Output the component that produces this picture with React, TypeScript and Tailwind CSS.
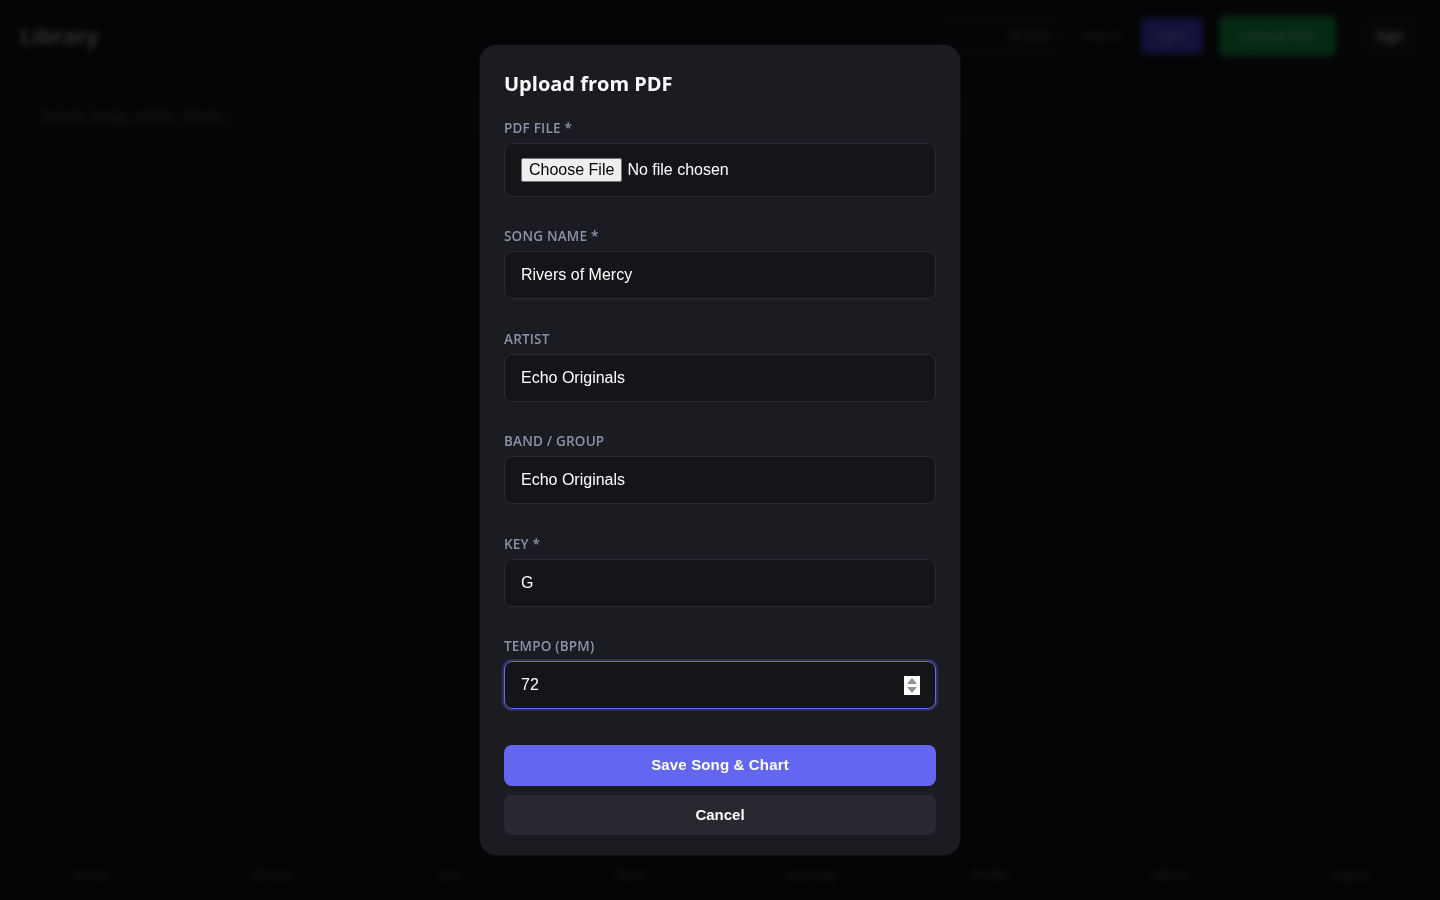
import React from "react";

const labelCls =
  "block text-[13.5px] leading-[18px] font-semibold uppercase tracking-[0.015em] text-[#8a93a6] mb-1.5";
const inputCls =
  "w-full h-12 rounded-lg border border-[#2a2b32] bg-[#141519] px-4 text-base text-white outline-none";

function Field({ label, value }: { label: string; value: string }) {
  return (
    <div className="mb-[30.5px]">
      <label className={labelCls} style={{ fontFamily: "'Open Sans', sans-serif" }}>
        {label}
      </label>
      <input
        className={inputCls}
        style={{ fontFamily: "'Liberation Sans', Arial, sans-serif" }}
        defaultValue={value}
      />
    </div>
  );
}

export default function App() {
  const nav = ["Home", "Library", "Sets", "Team", "Learning", "Profile", "Admin", "Logout"];
  return (
    <div
      className="relative w-[1440px] h-[900px] overflow-hidden bg-[#121318] text-white"
      style={{ fontFamily: "'Open Sans', sans-serif" }}
    >
      {/* Background page */}
      <div className="flex flex-col h-full">
        <header className="h-[72px] flex items-center justify-between px-5 border-b border-[#24252c]">
          <h1 className="text-[22px] font-bold text-[#b8bac0]">Library</h1>
          <div className="flex items-center gap-3">
            <div className="h-9 w-[120px] rounded-md border border-[#2a2b32] bg-[#16171c] flex items-center justify-end px-3 text-xs text-[#888]">
              All keys
            </div>
            <span className="text-xs text-[#777] px-2">Import</span>
            <button className="h-9 px-4 rounded-md bg-[#4f46e5] text-sm text-[#c7c9ff]">Sync</button>
            <button className="h-10 px-5 rounded-md bg-[#16a34a] text-sm text-[#b6f0c8] ml-1">Upload PDF</button>
            <button className="h-9 px-4 rounded-md bg-[#1a1b20] text-sm font-semibold text-[#e5e5e5] ml-3">Sign</button>
          </div>
        </header>
        <div className="px-5 pt-6">
          <div className="h-10 rounded-md border border-[#22232a] bg-[#15161b] flex items-center px-5 text-sm text-[#777]">
            Search songs, artists, charts...
          </div>
        </div>
        <div className="flex-1" />
        <nav className="h-[52px] grid grid-cols-8 border-t border-[#1e1f25] bg-[#111216]">
          {nav.map((n) => (
            <div key={n} className="flex items-center justify-center text-xs text-[#777]">
              {n}
            </div>
          ))}
        </nav>
      </div>

      {/* Overlay */}
      <div className="absolute inset-0 bg-black/75 backdrop-blur-[3px] flex items-start justify-center pt-[45px]">
        <div className="w-[480px] rounded-2xl bg-[#1b1c21] shadow-[0_0_0_1px_rgba(255,255,255,0.03)] px-6 pt-6 pb-5">
          <h2 className="text-[20px] leading-7 font-bold text-white mb-[21px] pt-px">Upload from PDF</h2>

          <div className="mb-[30px]">
            <label className={labelCls}>PDF FILE *</label>
            <div
              className="h-[54px] rounded-lg border border-[#2a2b32] bg-[#141519] px-4 flex items-center"
              style={{ fontFamily: "'Liberation Sans', Arial, sans-serif" }}
            >
              <span className="h-6 px-[7px] flex items-center rounded-[2px] border border-[#767676] bg-[#efefef] text-base text-black">
                Choose File
              </span>
              <span className="ml-[5px] text-base text-white">No file chosen</span>
            </div>
          </div>

          <Field label="SONG NAME *" value="Rivers of Mercy" />
          <Field label="ARTIST" value="Echo Originals" />
          <Field label="BAND / GROUP" value="Echo Originals" />
          <Field label="KEY *" value="G" />

          <div>
            <label className={labelCls}>TEMPO (BPM)</label>
            <div className="relative">
              <input
                className="w-full h-12 rounded-lg border border-[#6366f1] bg-[#141519] px-4 text-base text-white outline-none shadow-[0_0_0_2px_rgba(99,102,241,0.25)]"
                style={{ fontFamily: "'Liberation Sans', Arial, sans-serif" }}
                defaultValue="72"
              />
              <div className="absolute right-[16px] top-[15px] w-4 h-[19px] bg-white flex flex-col items-center justify-center gap-[3px]">
                <svg width="10" height="6" viewBox="0 0 10 6">
                  <path d="M5 0 L10 6 L0 6 Z" fill="#8f8f8f" />
                </svg>
                <svg width="10" height="6" viewBox="0 0 10 6">
                  <path d="M0 0 L10 0 L5 6 Z" fill="#8f8f8f" />
                </svg>
              </div>
            </div>
          </div>

          <button
            className="mt-9 w-full h-[41px] rounded-lg bg-[#6366f1] text-[15px] font-bold text-white tracking-[0.01em]"
            style={{ fontFamily: "'Liberation Sans', Arial, sans-serif" }}
          >
            Save Song &amp; Chart
          </button>
          <button
            className="mt-[9px] w-full h-10 rounded-lg bg-[#272830] text-[15px] font-bold text-white"
            style={{ fontFamily: "'Liberation Sans', Arial, sans-serif" }}
          >
            Cancel
          </button>
        </div>
      </div>
    </div>
  );
}
